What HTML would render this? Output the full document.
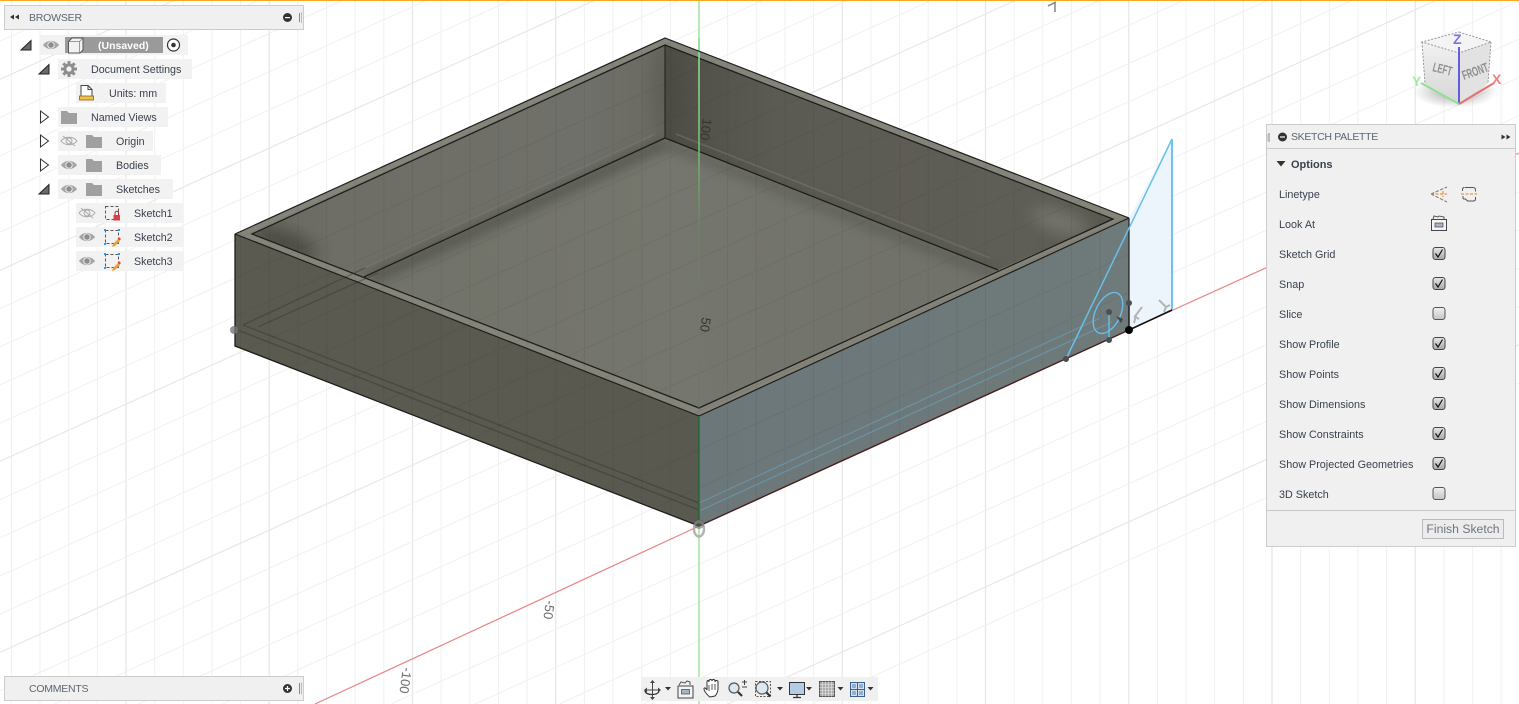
<!DOCTYPE html>
<html><head><meta charset="utf-8"><style>
html,body{margin:0;padding:0;background:#fff;overflow:hidden}
#r{position:relative;width:1519px;height:704px;overflow:hidden;background:#fff;font-family:"Liberation Sans",sans-serif;font-size:11px;color:#3a414e}
#r>svg{position:absolute;left:0;top:0}
.bar{position:absolute;background:#f0f0f0;border:1px solid #ccc;box-sizing:border-box}
.row{position:absolute;background:#f2f2f2;height:20px}
.t{position:absolute;line-height:14px;white-space:nowrap;font-size:10.7px}
.h{color:#5d6675;font-size:10.5px;letter-spacing:-.2px}
.p{font-size:10.8px}
</style></head><body><div id="r">
<svg width="1519" height="704" viewBox="0 0 1519 704" id="scene">
<defs>
<linearGradient id="wl" x1="252" y1="0" x2="665" y2="0" gradientUnits="userSpaceOnUse"><stop offset="0" stop-color="#67675f"/><stop offset=".2" stop-color="#6e6e66"/><stop offset=".8" stop-color="#70706a"/><stop offset="1" stop-color="#6a6a62"/></linearGradient>
<linearGradient id="wr" x1="665" y1="0" x2="1113" y2="0" gradientUnits="userSpaceOnUse"><stop offset="0" stop-color="#4e4d46"/><stop offset=".25" stop-color="#5c5b53"/><stop offset=".8" stop-color="#5f5e56"/><stop offset="1" stop-color="#5a5950"/></linearGradient>
<linearGradient id="fl" x1="450" y1="300" x2="900" y2="260" gradientUnits="userSpaceOnUse"><stop offset="0" stop-color="#72736a"/><stop offset=".5" stop-color="#75766d"/><stop offset="1" stop-color="#71726a"/></linearGradient>
<linearGradient id="fa" x1="235" y1="0" x2="699" y2="0" gradientUnits="userSpaceOnUse"><stop offset="0" stop-color="#5b5a51"/><stop offset="1" stop-color="#5a594f"/></linearGradient>
<linearGradient id="fb" x1="699" y1="0" x2="1129" y2="0" gradientUnits="userSpaceOnUse"><stop offset="0" stop-color="#6b7779"/><stop offset="1" stop-color="#6f7a7a"/></linearGradient>
<linearGradient id="gaxis" x1="0" y1="38" x2="0" y2="416" gradientUnits="userSpaceOnUse"><stop offset="0" stop-color="#8fe28f"/><stop offset=".3" stop-color="#6fc06f"/><stop offset=".5" stop-color="#6f8a68" stop-opacity=".6"/><stop offset="1" stop-color="#6f7a68" stop-opacity=".4"/></linearGradient>
<linearGradient id="ck" x1="0" y1="0" x2="0" y2="1"><stop offset="0" stop-color="#e8e8e8"/><stop offset="1" stop-color="#a8a8a8"/></linearGradient>
<linearGradient id="cu" x1="0" y1="0" x2="0" y2="1"><stop offset="0" stop-color="#f0f0f0"/><stop offset="1" stop-color="#c4c4c4"/></linearGradient>
<linearGradient id="cube" x1="0" y1="0" x2="0" y2="1"><stop offset="0" stop-color="#f6f6f6"/><stop offset="1" stop-color="#d6d6d6"/></linearGradient>
<radialGradient id="sh"><stop offset="0" stop-color="#777" stop-opacity=".7"/><stop offset="1" stop-color="#888" stop-opacity="0"/></radialGradient>
<clipPath id="boxclip"><polygon points="665,38 1129,218 1129,330 699,526 235,346 235,234"/></clipPath>
<clipPath id="inner"><polygon points="252,234 665,45 1113,219 699,408"/></clipPath>
<filter id="b8" x="-50%" y="-50%" width="200%" height="200%"><feGaussianBlur stdDeviation="8"/></filter>
<filter id="b5" x="-50%" y="-50%" width="200%" height="200%"><feGaussianBlur stdDeviation="5"/></filter>
</defs>
<g id="grid"></g>
<!-- sketch plane -->
<polygon points="1129,218 1172,139 1172,310 1129,330" fill="#edf5fc"/>
<!-- red axis -->
<line x1="699" y1="526" x2="315" y2="704" stroke="#e98585" stroke-width="1.2"/>
<line x1="1129" y1="330" x2="1519" y2="153" stroke="#e98585" stroke-width="1.2"/>
<!-- green axis -->
<line x1="699" y1="0" x2="699" y2="704" stroke="#a5e6a5" stroke-width="1.6"/>
<!-- box -->
<polygon points="235,234 699,416 699,526 235,346" fill="url(#fa)"/>
<polygon points="699,416 1129,218 1129,330 699,526" fill="url(#fb)"/>
<polygon points="665,38 1129,218 699,416 235,234" fill="#85847a"/>
<polygon points="252,234 665,45 665,138 364,277" fill="url(#wl)"/>
<polygon points="665,45 1113,219 998,270 665,138" fill="url(#wr)"/>
<polygon points="665,138 998,270 699,408 364,277" fill="url(#fl)"/>
<!-- soft shading -->
<g clip-path="url(#inner)">
<ellipse cx="285" cy="243" rx="34" ry="11" transform="rotate(20 285 243)" fill="#3f3e38" opacity=".75" filter="url(#b8)"/>
<line x1="370" y1="279" x2="665" y2="143" stroke="#4a4a43" stroke-width="14" opacity=".55" filter="url(#b5)"/>
<line x1="665" y1="143" x2="998" y2="275" stroke="#4a4a43" stroke-width="12" opacity=".35" filter="url(#b5)"/>
<ellipse cx="1060" cy="222" rx="30" ry="11" transform="rotate(20 1060 222)" fill="#8a8a82" opacity=".55" filter="url(#b8)"/>
<ellipse cx="665" cy="90" rx="12" ry="50" fill="#46453e" opacity=".3" filter="url(#b8)"/>
</g>
<!-- subtle band above seam -->
<g fill="none" stroke="#7e7e74" stroke-width="1.6" opacity=".45">
<line x1="366" y1="267" x2="655" y2="134"/>
<line x1="676" y1="134" x2="990" y2="258"/>
</g>
<polygon points="252,234 665,45 1113,219 699,408" fill="none" stroke="#1e1e1a" stroke-width="1.3"/>
<line x1="665" y1="45" x2="665" y2="138" stroke="#1e1e1a" stroke-width="1"/>
<polyline points="364,277 665,138 998,270" fill="none" stroke="#1e1e1a" stroke-width="1.3"/>
<!-- ghost through lines -->
<g fill="none" stroke="#35352f" stroke-width="1.5" opacity=".42">
<line x1="235" y1="329" x2="699" y2="510"/>
<line x1="243" y1="325" x2="699" y2="503"/>
<line x1="243" y1="325" x2="365" y2="268"/>
<line x1="258" y1="327" x2="378" y2="273"/>
</g>
<!-- grid on box, subtle -->
<g id="ghost" clip-path="url(#boxclip)" opacity=".05"></g>
<!-- green on box -->
<line x1="699" y1="38" x2="699" y2="408" stroke="url(#gaxis)" stroke-width="1.6"/>
<!-- blue lines on face -->
<g stroke="#68a9c9" stroke-width="1.2" fill="none" opacity=".55">
<line x1="699" y1="511" x2="1112" y2="322"/>
<line x1="699" y1="503" x2="1100" y2="318"/>
</g>
<!-- box edges -->
<polyline points="235,234 665,38 1129,218" fill="none" stroke="#1e1e1a" stroke-width="1.2"/>
<polyline points="235,234 699,416 1129,218" fill="none" stroke="#1e1e1a" stroke-width="1.2"/>
<polyline points="235,234 235,346 699,526" fill="none" stroke="#1e1e1a" stroke-width="1.3"/>
<line x1="699" y1="526" x2="1129" y2="330" stroke="#4a1e1e" stroke-width="1.4"/>
<line x1="1129" y1="218" x2="1129" y2="330" stroke="#1e1e1a" stroke-width="1.2"/>
<line x1="699" y1="416" x2="699" y2="526" stroke="#1f6a2a" stroke-width="1.4"/>
<!-- origin blob -->
<ellipse cx="699" cy="529" rx="5" ry="7.500" fill="none" stroke="#a8a8a8" stroke-width="2.500" opacity=".85"/>
<circle cx="699" cy="524" r="5" fill="#555" opacity=".5"/>
<circle cx="234" cy="330" r="4" fill="#777" opacity=".8"/>
<!-- sketch -->
<line x1="1066" y1="359" x2="1172" y2="139" stroke="#67bfe9" stroke-width="1.5"/>
<line x1="1172" y1="139" x2="1172" y2="310" stroke="#6cc3ee" stroke-width="2"/>
<line x1="1129" y1="330" x2="1172" y2="310" stroke="#111" stroke-width="1.6"/>
<line x1="1129" y1="303" x2="1129" y2="330" stroke="#222" stroke-width="1.4"/>
<ellipse cx="1108" cy="313" rx="12.500" ry="22" transform="rotate(26 1108 313)" fill="none" stroke="#67bfe9" stroke-width="1.4"/>
<line x1="1109" y1="312" x2="1109" y2="340" stroke="#67bfe9" stroke-width="1.4"/>
<g stroke="#b4b4b4" stroke-width="2" fill="none">
<path d="M1134 323 L1136 315 L1142 307 M1134 316 L1139 319"/>
<path d="M1159 300 L1166 307 L1170 305 M1166 307 L1164 312"/>
</g>
<path d="M1116 316l7 3-2 4z" fill="#444"/>
<g fill="#4b4f52"><circle cx="1129" cy="303" r="3"/><circle cx="1109" cy="312" r="3"/><circle cx="1109" cy="340" r="3"/><circle cx="1066" cy="359" r="3"/></g>
<circle cx="1129" cy="330" r="4" fill="#000"/>
<!-- constraint at top -->
<path d="M1048 6 L1056 2 M1055 3 V12" stroke="#8c8c8c" stroke-width="1.600" fill="none"/>
<!-- axis numbers -->
<g font-family="Liberation Sans,sans-serif" font-size="13" fill="#5a5a5a">
<text transform="translate(703,118) rotate(98)" fill="#34342e">100</text>
<text transform="translate(702,317) rotate(98)" fill="#34342e">50</text>
<text transform="translate(546,600) rotate(98)" fill="#6a6a6a">-50</text>
<text transform="translate(403,667) rotate(98)" fill="#6a6a6a">-100</text>
</g>
<!-- view cube -->
<ellipse cx="1455" cy="92" rx="42" ry="16" fill="url(#sh)"/>
<polygon points="1459,32 1491,42 1488,83 1459,104 1425,84 1422,42" fill="url(#cube)"/>
<polygon points="1459,32 1491,42 1459,53 1422,42" fill="#f4f4f4"/>
<polygon points="1459,53 1491,42 1488,83 1459,104" fill="#e2e2e2"/>
<g fill="none" stroke="#8e8e8e" stroke-dasharray="2 1.500" stroke-width=".9"><polygon points="1459,32 1491,42 1459,53 1422,42"/><line x1="1422" y1="42" x2="1425" y2="84"/><line x1="1491" y1="42" x2="1488" y2="83"/></g>
<line x1="1459" y1="47" x2="1459" y2="104" stroke="#5050d8" stroke-width="1.800"/>
<line x1="1459" y1="104" x2="1421" y2="83" stroke="#8fe08f" stroke-width="2"/>
<line x1="1459" y1="104" x2="1494" y2="83" stroke="#e87070" stroke-width="2"/>
<g font-family="Liberation Sans,sans-serif" font-weight="bold" fill="#8e8e8e" font-size="13">
<text transform="translate(1432,71) rotate(14) scale(.6,1)">LEFT</text>
<text transform="translate(1464,80) rotate(-20) scale(.6,1)">FRONT</text>
</g>
<text x="1453" y="44" font-family="Liberation Sans,sans-serif" font-weight="bold" font-size="14" fill="#7474ee">Z</text>
<text x="1412" y="86" font-family="Liberation Sans,sans-serif" font-weight="bold" font-size="14" fill="#a0eca0">Y</text>
<text x="1492" y="84" font-family="Liberation Sans,sans-serif" font-weight="bold" font-size="14" fill="#f08080">X</text>
</svg>

<div style="position:absolute;left:0;top:0;width:1519px;height:1px;background:#f7a823"></div>

<!-- BROWSER -->
<div class="bar" style="left:4px;top:5px;width:300px;height:25px"></div>
<div class="t h" style="left:29px;top:10.500px">BROWSER</div>
<svg style="position:absolute;left:0;top:0" width="310" height="280">
<path d="M14 14.500v5l-4-2.500zM19 14.500v5l-4-2.500z" fill="#333"/>
<circle cx="287.500" cy="17.500" r="4.500" fill="#333"/><rect x="285" y="17" width="5" height="1.200" fill="#fff"/>
<path d="M299.500 13v9" stroke="#888"/><path d="M301.500 12v11" stroke="#bbb"/>
</svg>

<div class="row" style="left:40px;top:35px;width:148px"></div>
<div style="position:absolute;left:65px;top:37px;width:98px;height:16px;background:#9a9a9a"></div>
<div class="t" style="left:98px;top:39px;color:#fff;font-weight:bold;font-size:10.500px">(Unsaved)</div>
<div class="row" style="left:58px;top:59px;width:134px"></div>
<div class="t" style="left:91px;top:63px">Document Settings</div>
<div class="row" style="left:76px;top:83px;width:90px"></div>
<div class="t" style="left:109px;top:87px">Units: mm</div>
<div class="row" style="left:58px;top:107px;width:110px"></div>
<div class="t" style="left:91px;top:111px">Named Views</div>
<div class="row" style="left:58px;top:131px;width:95px"></div>
<div class="t" style="left:116px;top:135px">Origin</div>
<div class="row" style="left:58px;top:155px;width:103px"></div>
<div class="t" style="left:116px;top:159px">Bodies</div>
<div class="row" style="left:58px;top:179px;width:115px"></div>
<div class="t" style="left:116px;top:183px">Sketches</div>
<div class="row" style="left:76px;top:203px;width:107px"></div>
<div class="t" style="left:134px;top:207px">Sketch1</div>
<div class="row" style="left:76px;top:227px;width:108px"></div>
<div class="t" style="left:134px;top:231px">Sketch2</div>
<div class="row" style="left:76px;top:251px;width:108px"></div>
<div class="t" style="left:134px;top:255px">Sketch3</div>

<svg style="position:absolute;left:0;top:0" width="310" height="280">
<defs>
<g id="eye"><path d="M-8 0C-4-5.500 4-5.500 8 0C4 5.500-4 5.500-8 0Z" fill="#a6a6a6"/><circle r="3.800" fill="#e4e4e4"/><circle r="2.700" fill="#8c8c8c"/></g>
<g id="eyeoff" fill="none" stroke="#a8a8a8" stroke-width="1"><path d="M-8 0C-4-5 4-5 8 0C4 5-4 5-8 0Z"/><circle r="3"/><path d="M-6-5L6 5"/></g>
<path id="folder" d="M0 3h6l2 2h8v11H0z" fill="#a0a0a0"/>
<path id="tridown" d="M0 9.500L10 0v9.500z" fill="#6a6a6a" stroke="#222" stroke-width="1"/>
<path id="triright" d="M0 0l8 6-8 6z" fill="#fff" stroke="#333" stroke-width="1"/>
<g id="sk"><rect x=".5" y=".5" width="13" height="13" fill="none" stroke="#555" stroke-dasharray="3 2"/></g>
</defs>
<use href="#tridown" x="21" y="40.500"/>
<use href="#tridown" x="39" y="64.500"/>
<use href="#tridown" x="39" y="184.500"/>
<use href="#triright" x="40.500" y="111"/>
<use href="#triright" x="40.500" y="135"/>
<use href="#triright" x="40.500" y="159"/>
<use href="#eye" x="51" y="45"/>
<!-- cube -->
<path d="M68.500 41.500L72 38h11v12l-3 3H68.500z" fill="#f2f2f2"/><path d="M79.500 41.500H68.500M79.500 41.500L83 38M79.500 41.500V52.500" stroke="#999" fill="none"/><path d="M68.500 41.500L72 38h11v12l-3 3H68.500z" fill="none" stroke="#555"/>
<circle cx="173.500" cy="45" r="6" fill="#fff" stroke="#333" stroke-width="1.200"/><circle cx="173.500" cy="45" r="2.300" fill="#333"/>
<!-- gear -->
<g transform="translate(69,69)" fill="#8e8e8e"><circle r="5.600"/><g stroke="#8e8e8e" stroke-width="3"><path d="M0-8V8M-8 0H8M-5.700-5.700L5.700 5.700M-5.700 5.700L5.700-5.700"/></g><circle r="2.600" fill="#f2f2f2"/></g>
<!-- units -->
<path d="M81 85.500h7l4 4v7.500H81z" fill="#fff" stroke="#444"/><path d="M88 85.500v4h4" fill="none" stroke="#444"/><rect x="79.500" y="96" width="14" height="4" fill="#f2c14a" stroke="#8a6010" stroke-width=".8"/>
<use href="#folder" x="61" y="108"/>
<use href="#eyeoff" x="69" y="141"/>
<use href="#folder" x="86" y="132"/>
<use href="#eye" x="69" y="165"/>
<use href="#folder" x="86" y="156"/>
<use href="#eye" x="69" y="189"/>
<use href="#folder" x="86" y="180"/>
<use href="#eyeoff" x="87" y="213"/>
<use href="#eye" x="87" y="237"/>
<use href="#eye" x="87" y="261"/>
<use href="#sk" x="105" y="206"/>
<rect x="113.500" y="215" width="6.500" height="5.500" fill="#d8404a"/><path d="M115 215v-2a1.800 1.800 0 0 1 3.600 0v2" fill="none" stroke="#b23"/>
<use href="#sk" x="105" y="230"/><use href="#sk" x="105" y="254"/>
<g fill="#2a9df4"><rect x="104" y="229" width="2" height="2"/><rect x="118" y="229" width="2" height="2"/><rect x="104" y="243" width="2" height="2"/><rect x="104" y="253" width="2" height="2"/><rect x="118" y="253" width="2" height="2"/><rect x="104" y="267" width="2" height="2"/></g>
<path d="M113 244l5-5 2 2-5 5-3 1z" fill="#e8a33d"/><path d="M117.500 238.500l1.500-1.500 2 2-1.500 1.500z" fill="#e44"/>
<path d="M113 268l5-5 2 2-5 5-3 1z" fill="#e8a33d"/><path d="M117.500 262.500l1.500-1.500 2 2-1.500 1.500z" fill="#e44"/>
</svg>

<!-- COMMENTS -->
<div class="bar" style="left:4px;top:676px;width:300px;height:25px"></div>
<div class="t h" style="left:29px;top:681.500px;letter-spacing:-.25px">COMMENTS</div>
<svg style="position:absolute;left:280px;top:680px" width="26" height="18">
<circle cx="7.500" cy="8.500" r="4.500" fill="#333"/><path d="M5 8.500h5M7.500 6v5" stroke="#fff" stroke-width="1.200"/>
<path d="M19.500 3v11" stroke="#888"/><path d="M21.500 2.500v12" stroke="#bbb"/>
</svg>

<!-- PALETTE -->
<div class="bar" style="left:1266px;top:124px;width:250px;height:423px"></div>
<div style="position:absolute;left:1267px;top:148px;width:248px;height:1px;background:#ccc"></div>
<div style="position:absolute;left:1267px;top:510px;width:248px;height:1px;background:#c8c8c8"></div>
<div class="t h" style="left:1291px;top:129.500px;letter-spacing:-.32px">SKETCH PALETTE</div>
<div class="t" style="left:1291px;top:158px;font-weight:bold;font-size:11px">Options</div>
<div class="t p" style="left:1279px;top:188px">Linetype</div>
<div class="t p" style="left:1279px;top:218px">Look At</div>
<div class="t p" style="left:1279px;top:248px">Sketch Grid</div>
<div class="t p" style="left:1279px;top:278px">Snap</div>
<div class="t p" style="left:1279px;top:308px">Slice</div>
<div class="t p" style="left:1279px;top:338px">Show Profile</div>
<div class="t p" style="left:1279px;top:368px">Show Points</div>
<div class="t p" style="left:1279px;top:398px">Show Dimensions</div>
<div class="t p" style="left:1279px;top:428px">Show Constraints</div>
<div class="t p" style="left:1279px;top:458px">Show Projected Geometries</div>
<div class="t p" style="left:1279px;top:488px">3D Sketch</div>
<div style="position:absolute;left:1422px;top:519px;width:82px;height:20px;box-sizing:border-box;border:1px solid #bbb;background:#ececec;color:#6f7580;font-size:12.200px;line-height:19px;text-align:center;white-space:nowrap">Finish Sketch</div>
<svg style="position:absolute;left:1260px;top:120px" width="259" height="400">
<defs>
<g id="cb"><rect x=".5" y=".5" width="12" height="12" rx="2.500" fill="url(#ck)" stroke="#444"/><path d="M3 6.500l2.500 3.500 4.500-7.500" fill="none" stroke="#111" stroke-width="1.200"/></g>
<g id="cu0"><rect x=".5" y=".5" width="12" height="12" rx="2.500" fill="url(#cu)" stroke="#555"/></g>
</defs>
<path d="M9 13v9" stroke="#888"/><path d="M7 14v7" stroke="#bbb"/>
<circle cx="22.500" cy="17" r="4.500" fill="#333"/><rect x="20" y="16.400" width="5" height="1.200" fill="#fff"/>
<path d="M241.500 14.500v5l4-2.500zM246.500 14.500v5l4-2.500z" fill="#333"/>
<path d="M16.500 41h9l-4.500 5.500z" fill="#333"/>
<!-- linetype -->
<path d="M171 74L187 67M171 74L187 82" stroke="#777" fill="none" stroke-dasharray="3.500 1.500"/>
<path d="M171 74h16M183 71v6" stroke="#e8801e" stroke-dasharray="3 1.500" fill="none"/>
<path d="M205 67.500h8q2.500 0 2.500 2.500v1.500M215.500 77v2q0 2-2 2h-6l-2-2h-1.500q-1 0-1-1v-2M202.500 71v-1.500q0-2 2-2" stroke="#555" fill="none"/>
<path d="M201 74h16" stroke="#e8801e" stroke-dasharray="3 1.500"/>
<!-- look at -->
<rect x="171.500" y="99.500" width="15" height="11" fill="#f4f4f4" stroke="#444"/><rect x="175" y="103" width="8" height="4" fill="#a8b4c4" stroke="#444" stroke-width=".7"/><path d="M173 99l1-3 4 1 1-1 5 1v2" fill="none" stroke="#555"/>
<use href="#cb" x="172.500" y="127"/>
<use href="#cb" x="172.500" y="157"/>
<use href="#cu0" x="172.500" y="187"/>
<use href="#cb" x="172.500" y="217"/>
<use href="#cb" x="172.500" y="247"/>
<use href="#cb" x="172.500" y="277"/>
<use href="#cb" x="172.500" y="307"/>
<use href="#cb" x="172.500" y="337"/>
<use href="#cu0" x="172.500" y="367"/>
</svg>

<!-- TOOLBAR -->
<div style="position:absolute;left:641px;top:677px;width:237px;height:24px;background:#f0f0f0"></div>
<svg style="position:absolute;left:630px;top:660px" width="260" height="44">
<!-- orbit -->
<path d="M22.500 22v16M16 30h13" stroke="#444" fill="none"/><path d="M22.500 20l-2.500 3h5zM22.500 40l-2.500-3h5zM14 30l3-2.500v5zM31 30l-3-2.500v5z" fill="#444"/><path d="M15 30.500c0 3 4 4 7 4s6-1 7-3" fill="none" stroke="#333" stroke-width="1.300"/>
<path d="M35 27h6l-3 3.500z" fill="#333"/>
<!-- look at -->
<rect x="48" y="26" width="15" height="12" fill="#f4f4f4" stroke="#444"/><rect x="51.500" y="29.500" width="8" height="4.500" fill="#a8b4c4" stroke="#444" stroke-width=".7"/><path d="M49 25l2-3 4 1 2-2 3 1v3" fill="none" stroke="#555"/>
<!-- hand -->
<path d="M80 37c-2-1-6-6-6-8s2-1 3 1v-8c0-2 2-2 2 0v-1c0-2 3-2 3 0v0c0-2 3-2 3 0v1c0-2 3-2 3 0v6c0 5-2 7-3 8z" fill="#fff" stroke="#333"/><path d="M79 25v6M82 24v6M85 24v6" stroke="#333" stroke-width=".8"/>
<!-- zoom -->
<circle cx="104" cy="28" r="5" fill="#dbe8f2" stroke="#555" stroke-width="1.200"/><path d="M108 32l4 4" stroke="#333" stroke-width="2.200"/><path d="M112 22h5M114.500 20v5M112 27h5" stroke="#444"/>
<!-- fit -->
<rect x="125.500" y="21.500" width="15" height="15" fill="none" stroke="#555" stroke-dasharray="2 1.500"/><circle cx="132" cy="28" r="6" fill="#dbe8f2" stroke="#555" stroke-width="1.200"/><path d="M136.500 32.500l4 4" stroke="#333" stroke-width="2.200"/>
<path d="M147 27h6l-3 3.500z" fill="#333"/>
<!-- display -->
<rect x="159.500" y="22.500" width="15" height="12" fill="#b5cde4" stroke="#333"/><path d="M163 37.500h8M167 35v2" stroke="#333" stroke-width="1.300"/>
<path d="M176 27h6l-3 3.500z" fill="#333"/>
<!-- grid -->
<rect x="189.500" y="21.500" width="15" height="15" fill="#aaa" stroke="#555"/><path d="M192.500 21.500v15M195.500 21.500v15M198.500 21.500v15M201.500 21.500v15M189.500 24.500h15M189.500 27.500h15M189.500 30.500h15M189.500 33.500h15" stroke="#e8e8e8" stroke-width=".6"/>
<path d="M207.500 27h6l-3 3.500z" fill="#333"/>
<!-- viewports -->
<rect x="220.500" y="22.500" width="14" height="14" fill="#d6e2ef" stroke="#3d5f8d"/><path d="M220.500 29.500h14M227.500 22.500v14" stroke="#3d5f8d"/><rect x="222" y="24" width="4" height="4" fill="#8fb0d2"/><rect x="229" y="24" width="4" height="4" fill="#8fb0d2"/><rect x="222" y="31" width="4" height="4" fill="#8fb0d2"/><rect x="229" y="31" width="4" height="4" fill="#8fb0d2"/>
<path d="M237.500 27h6l-3 3.500z" fill="#333"/>
</svg>
</div>
<script>
(function(){
var ns="http://www.w3.org/2000/svg",g=document.getElementById("grid"),h=document.getElementById("ghost"),s=0.454;
function L(p,x1,y1,x2,y2,c,w){var l=document.createElementNS(ns,"line");l.setAttribute("x1",x1);l.setAttribute("y1",y1);l.setAttribute("x2",x2);l.setAttribute("y2",y2);l.setAttribute("stroke",c);l.setAttribute("stroke-width",w);p.appendChild(l);}
function D(p,y0,xa,xb,c,w){
 var f=function(x){return y0-s*(x-699)};
 var x1=Math.max(xa,699+(y0-704)/s),x2=Math.min(xb,699+y0/s);
 if(x2<=x1)return;
 L(p,x1,f(x1),x2,f(x2),c,w);
}
for(var k=-24;k<=28;k++){var x=699+28.65*k,m=(k%5===0);L(g,x,0,x,704,m?"#e6e6e6":"#f1f1f1",m?1.2:1);if(x>=235&&x<=1129)L(h,x,38,x,526,"#000",1);}
for(var j=-6;j<=44;j++){var y0=526-38.2*j,m2=(j%5===0);if(j===0)continue;
D(g,y0,0,1519,m2?"#e8e8e8":"#f0f0f0",m2?1.2:1);
D(h,y0,235,1129,"#000",1);}
})();
</script>
</body></html>
